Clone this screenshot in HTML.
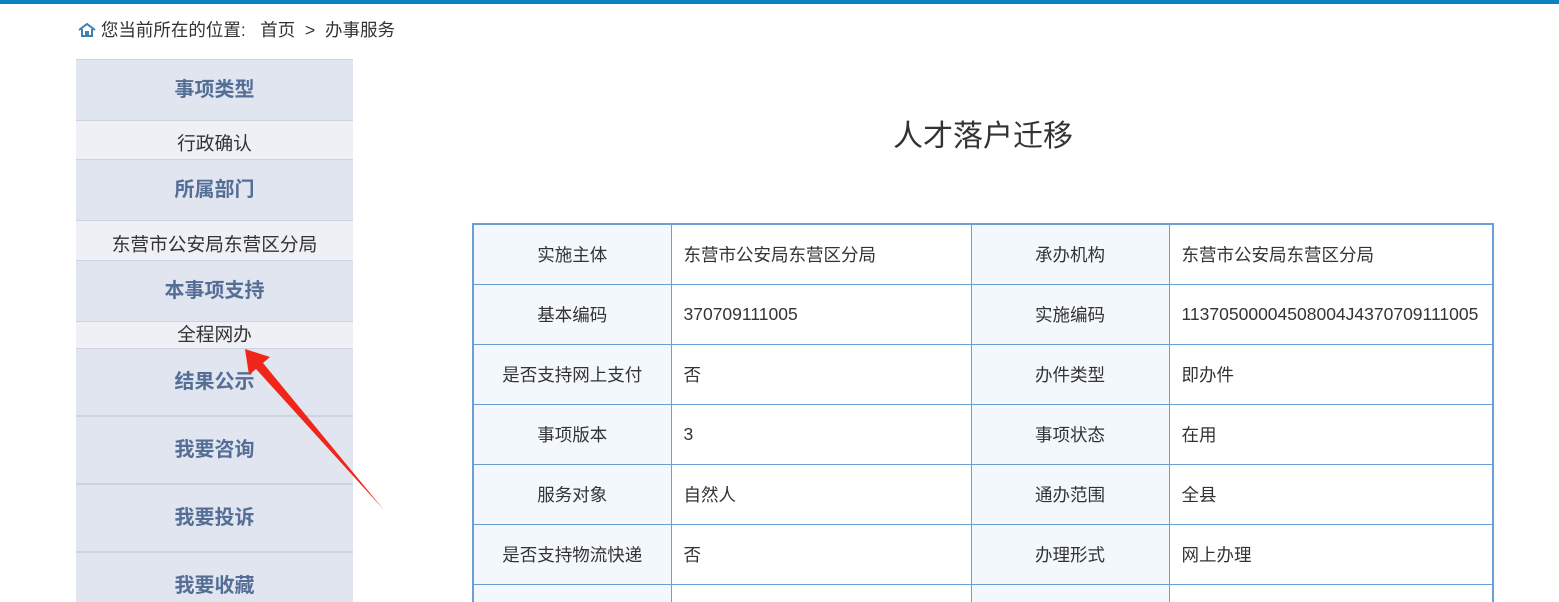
<!DOCTYPE html>
<html><head><meta charset="utf-8"><style>
*{margin:0;padding:0;box-sizing:border-box}
html,body{width:1559px;height:602px;overflow:hidden}
body{background:#fff;font-family:"Liberation Sans","Noto Sans CJK SC",sans-serif;color:#333;position:relative}
.top{position:absolute;left:0;top:0;width:1559px;height:4px;background:#0a80c0}
.crumb{position:absolute;left:78px;top:19px;font-size:17.5px;color:#333;line-height:22px}
.side{position:absolute;left:76px;top:59px;width:277px;height:543px;background:#e1e5f0;overflow:hidden}
.b{position:absolute;left:0;width:277px;text-align:center}
.h{background:#e1e5f0;color:#556e96;font-weight:bold;font-size:20px;border-top:1px solid #cdd1e0}
.i{background:#eff0f6;color:#333;font-size:18.7px;border-top:1px solid #cdd1e0}
.h2{background:#e1e5f0;color:#556e96;font-weight:bold;font-size:20px;border-top:2px solid #cdd1e0}
.title{position:absolute;left:893px;top:111px;font-size:30px;color:#333}
.wrap{position:absolute;left:472px;top:223px;width:1022px;height:379px;overflow:hidden}
table{width:1022px;border-collapse:collapse;border:2px solid #6a9fd4;font-size:17.5px}
td{border:1px solid #6a9fd4;height:60px;padding:0 12px}
td.l{background:#f3f8fd;text-align:center}
</style></head><body>
<div class="top"></div>
<div class="crumb"><svg width="18" height="14" viewBox="0 0 18 14" style="vertical-align:-1px"><path d="M1 7L9 1l8 6" fill="none" stroke="#3f7fb0" stroke-width="2"/><path d="M4 6v7h10V6" fill="none" stroke="#3f7fb0" stroke-width="2"/><rect x="7" y="8" width="4" height="5" fill="#3f7fb0"/></svg> 您当前所在的位置:&nbsp;&nbsp;&nbsp;首页&nbsp;&nbsp;&gt;&nbsp;&nbsp;办事服务</div>
<div class="side">
<div class="b h" style="top:0;height:61px;line-height:60px">事项类型</div>
<div class="b i" style="top:61px;height:39px;line-height:46px">行政确认</div>
<div class="b h" style="top:100px;height:61px;line-height:60px">所属部门</div>
<div class="b i" style="top:161px;height:40px;line-height:48px">东营市公安局东营区分局</div>
<div class="b h" style="top:201px;height:61px;line-height:60px">本事项支持</div>
<div class="b i" style="top:262px;height:27px;line-height:26px">全程网办</div>
<div class="b h" style="top:289px;height:67px;line-height:66px">结果公示</div>
<div class="b h2" style="top:356px;height:68px;line-height:66px">我要咨询</div>
<div class="b h2" style="top:424px;height:68px;line-height:66px">我要投诉</div>
<div class="b h2" style="top:492px;height:68px;line-height:66px">我要收藏</div>
</div>
<svg style="position:absolute;left:0;top:0" width="1559" height="602"><path d="M245 349L270 357L263 363L384 510L256 369L249 375Z" fill="#f0261a"/></svg>
<div class="title">人才落户迁移</div>
<div class="wrap">
<table>
<colgroup><col style="width:198px"><col style="width:300px"><col style="width:198px"><col></colgroup>
<tr><td class="l">实施主体</td><td>东营市公安局东营区分局</td><td class="l">承办机构</td><td>东营市公安局东营区分局</td></tr>
<tr><td class="l">基本编码</td><td>370709111005</td><td class="l">实施编码</td><td>11370500004508004J4370709111005</td></tr>
<tr><td class="l">是否支持网上支付</td><td>否</td><td class="l">办件类型</td><td>即办件</td></tr>
<tr><td class="l">事项版本</td><td>3</td><td class="l">事项状态</td><td>在用</td></tr>
<tr><td class="l">服务对象</td><td>自然人</td><td class="l">通办范围</td><td>全县</td></tr>
<tr><td class="l">是否支持物流快递</td><td>否</td><td class="l">办理形式</td><td>网上办理</td></tr>
<tr><td class="l"></td><td></td><td class="l"></td><td></td></tr>
</table>
</div>
</body></html>
